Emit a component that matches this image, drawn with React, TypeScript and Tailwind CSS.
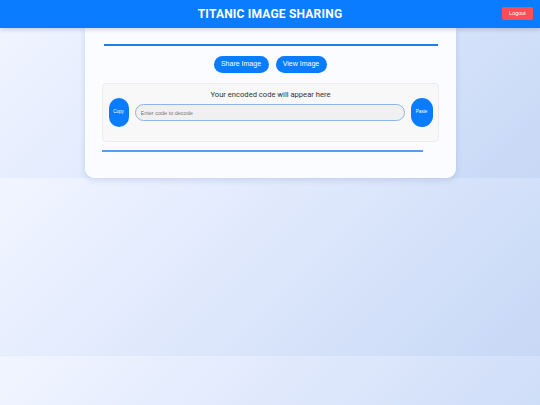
export default function App() {
  return (
    <div className="min-h-screen bg-[linear-gradient(135deg,#f1f5ff_0%,#dde7fc_50%,#c7d8f5_100%)] bg-[length:100%_178px] bg-repeat font-['Roboto',sans-serif]">
      {/* Header */}
      <header className="relative z-10 h-[28px] bg-[#0a7cff] shadow-[0_2px_4px_rgba(0,0,0,0.15)] flex items-center justify-center">
        <h1 className="text-white font-bold text-[12px] tracking-[0.2px] leading-none">TITANIC IMAGE SHARING</h1>
        <button className="absolute right-[7px] top-[7px] h-[13px] w-[31px] rounded-[2px] bg-[#ff4d57] text-white text-[5.5px] font-['Liberation_Sans',sans-serif] flex items-center justify-center">
          Logout
        </button>
      </header>

      {/* Card */}
      <div className="mx-auto w-[371px] h-[150px] bg-[#fafcff] rounded-b-[9px] shadow-[0_2px_6px_rgba(60,90,160,0.18)] pt-[16px]">
        <div className="ml-[19px] mr-[18px] h-[2px] bg-[#1a80ec]"></div>

        <div className="mt-[10px] flex justify-center gap-[7px]">
          <button className="h-[17px] w-[55px] rounded-full bg-[#0a7cff] text-white text-[7px] font-['Liberation_Sans',sans-serif]">Share Image</button>
          <button className="h-[17px] w-[51px] rounded-full bg-[#0a7cff] text-white text-[7px] font-['Liberation_Sans',sans-serif]">View Image</button>
        </div>

        <div className="mt-[10px] mx-[17px] h-[59px] rounded-[4px] bg-[#f8f8f8] border border-[#ececec] pl-[6px] pr-[5px] pt-[5px]">
          <p className="text-center text-[7.6px] leading-[11px] text-[#333]">Your encoded code will appear here</p>
          <div className="-mt-[2px] flex items-center">
            <button className="h-[29px] w-[20px] rounded-full bg-[#0a7cff] text-white text-[4.5px] font-['Liberation_Sans',sans-serif] flex items-center justify-center">Copy</button>
            <input
              placeholder="Enter code to decode"
              className="ml-[6px] h-[17px] w-[270px] rounded-full border border-[#8ab6e8] bg-[#f0f0f0] px-[5px] text-[5.5px] text-[#333] placeholder:text-[#777] font-['Liberation_Sans',sans-serif] outline-none"
            />
            <button className="ml-[6px] h-[29px] w-[22px] rounded-full bg-[#0a7cff] text-white text-[4.5px] font-['Liberation_Sans',sans-serif] flex items-center justify-center">Paste</button>
          </div>
        </div>

        <div className="mt-[8px] ml-[17px] w-[321px] h-[1.5px] bg-[#5a9ee8]"></div>
      </div>
    </div>
  );
}
